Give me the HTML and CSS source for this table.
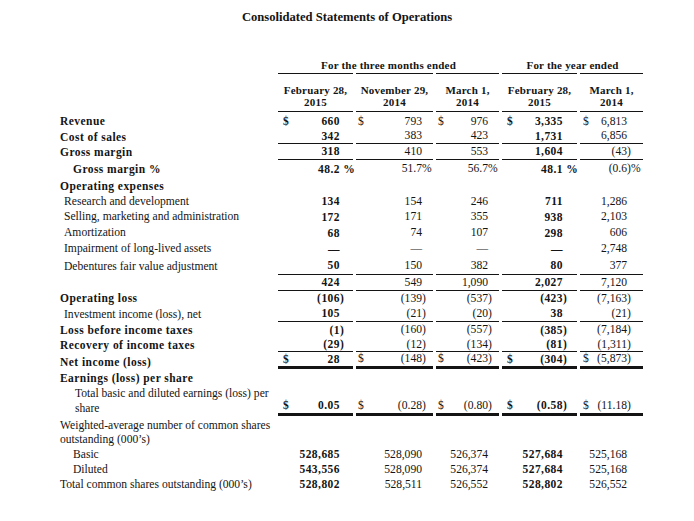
FILE: index.html
```html
<!DOCTYPE html>
<html lang="en">
<head>
<meta charset="utf-8">
<title>Consolidated Statements of Operations</title>
<link rel="stylesheet" href="styles.css">
</head>
<body>
<main class="page">
  <h1 class="title">Consolidated Statements of Operations</h1>
  <table class="stmt">
    <colgroup>
      <col class="c-label"><col class="c-1"><col class="c-2"><col class="c-3"><col class="c-4"><col class="c-5">
    </colgroup>
    <thead>
      <tr class="grp"><th></th><th colspan="3">For the three months ended</th><th colspan="2">For the year ended</th></tr>
      <tr class="grp-rule"><th></th><th></th><th></th><th></th><th></th><th></th></tr>
      <tr class="cols"><th></th><th>February 28,<br>2015</th><th>November 29,<br>2014</th><th>March 1,<br>2014</th><th>February 28,<br>2015</th><th>March 1,<br>2014</th></tr>
    </thead>
    <tbody>
      <tr class="main lh15 pt2"><th>Revenue</th><td><span class="cur">$</span>660</td><td><span class="cur">$</span>793</td><td><span class="cur">$</span>976</td><td><span class="cur">$</span>3,335</td><td><span class="cur">$</span>6,813</td></tr>
      <tr class="main lh14 u"><th>Cost of sales</th><td>342</td><td>383</td><td>423</td><td>1,731</td><td>6,856</td></tr>
      <tr class="main lh15 u"><th>Gross margin</th><td>318</td><td>410</td><td>553</td><td>1,604</td><td>(43<span class="sfx">)</span></td></tr>
      <tr class="main lh16 pt1"><th class="in2">Gross margin %</th><td>48.2<span class="sfx"> %</span></td><td>51.7<span class="sfx">%</span></td><td>56.7<span class="sfx">%</span></td><td>48.1<span class="sfx"> %</span></td><td>(0.6<span class="sfx">)%</span></td></tr>
      <tr class="main lh16 pt1"><th>Operating expenses</th><td></td><td></td><td></td><td></td><td></td></tr>
      <tr class="lh15"><th class="in1">Research and development</th><td>134</td><td>154</td><td>246</td><td>711</td><td>1,286</td></tr>
      <tr class="lh16"><th class="in1">Selling, marketing and administration</th><td>172</td><td>171</td><td>355</td><td>938</td><td>2,103</td></tr>
      <tr class="lh16"><th class="in1">Amortization</th><td>68</td><td>74</td><td>107</td><td>298</td><td>606</td></tr>
      <tr class="lh16"><th class="in1">Impairment of long-lived assets</th><td>—</td><td>—</td><td>—</td><td>—</td><td>2,748</td></tr>
      <tr class="lh17 u"><th class="in1">Debentures fair value adjustment</th><td>50</td><td>150</td><td>382</td><td>80</td><td>377</td></tr>
      <tr class="lh15 u"><th></th><td>424</td><td>549</td><td>1,090</td><td>2,027</td><td>7,120</td></tr>
      <tr class="main lh15"><th>Operating loss</th><td>(106<span class="sfx">)</span></td><td>(139<span class="sfx">)</span></td><td>(537<span class="sfx">)</span></td><td>(423<span class="sfx">)</span></td><td>(7,163<span class="sfx">)</span></td></tr>
      <tr class="lh15 u"><th class="in1">Investment income (loss), net</th><td>105</td><td>(21<span class="sfx">)</span></td><td>(20<span class="sfx">)</span></td><td>38</td><td>(21<span class="sfx">)</span></td></tr>
      <tr class="main lh16"><th>Loss before income taxes</th><td>(1<span class="sfx">)</span></td><td>(160<span class="sfx">)</span></td><td>(557<span class="sfx">)</span></td><td>(385<span class="sfx">)</span></td><td>(7,184<span class="sfx">)</span></td></tr>
      <tr class="main lh13 u"><th>Recovery of income taxes</th><td>(29<span class="sfx">)</span></td><td>(12<span class="sfx">)</span></td><td>(134<span class="sfx">)</span></td><td>(81<span class="sfx">)</span></td><td>(1,311<span class="sfx">)</span></td></tr>
      <tr class="main lh14 uu"><th>Net income (loss)</th><td><span class="cur">$</span>28</td><td><span class="cur">$</span>(148<span class="sfx">)</span></td><td><span class="cur">$</span>(423<span class="sfx">)</span></td><td><span class="cur">$</span>(304<span class="sfx">)</span></td><td><span class="cur">$</span>(5,873<span class="sfx">)</span></td></tr>
      <tr class="main lh15 pt2"><th>Earnings (loss) per share</th><td></td><td></td><td></td><td></td><td></td></tr>
      <tr class="lh15 uu"><th class="in3">Total basic and diluted earnings (loss) per<br>share</th><td><span class="cur">$</span>0.05</td><td><span class="cur">$</span>(0.28<span class="sfx">)</span></td><td><span class="cur">$</span>(0.80<span class="sfx">)</span></td><td><span class="cur">$</span>(0.58<span class="sfx">)</span></td><td><span class="cur">$</span>(11.18<span class="sfx">)</span></td></tr>
      <tr class="lh14 pt3"><th>Weighted-average number of common shares<br>outstanding (000’s)</th><td></td><td></td><td></td><td></td><td></td></tr>
      <tr class="lh15"><th class="in2">Basic</th><td>528,685</td><td>528,090</td><td>526,374</td><td>527,684</td><td>525,168</td></tr>
      <tr class="lh15"><th class="in2">Diluted</th><td>543,556</td><td>528,090</td><td>526,374</td><td>527,684</td><td>525,168</td></tr>
      <tr class="lh15"><th>Total common shares outstanding (000’s)</th><td>528,802</td><td>528,511</td><td>526,552</td><td>528,802</td><td>526,552</td></tr>
    </tbody>
  </table>
</main>
</body>
</html>
```
FILE: styles.css
```css
html, body {
  margin: 0;
  background: #fff;
}

body {
  font-family: "Liberation Serif", "Times New Roman", serif;
  font-size: 11.6px;
  color: #141414;
}

.page {
  width: 694px;
  padding-top: 9px;
}

.title {
  margin: 0;
  font-size: 12.6px;
  line-height: 16px;
  font-weight: bold;
  text-align: center;
}

.stmt {
  margin: 32px 0 0 57px;
  width: 589px;
  table-layout: fixed;
  border-collapse: separate;
  border-spacing: 3px 0;
}

.c-label { width: 215px; }
.c-1 { width: 75px; }
.c-2 { width: 77px; }
.c-3 { width: 63px; }
.c-4 { width: 75px; }
.c-5 { width: 63px; }

.stmt th,
.stmt td {
  padding: 0;
  font-weight: normal;
  white-space: nowrap;
  vertical-align: bottom;
}

/* header */
.grp th {
  font-weight: bold;
  font-size: 11px;
  letter-spacing: 0.2px;
  line-height: 16px;
  text-align: center;
}

.grp-rule th {
  height: 0;
  line-height: 0;
  font-size: 0;
}

.grp-rule th + th {
  border-top: 1px solid #141414;
}

.cols th {
  font-weight: bold;
  font-size: 11px;
  letter-spacing: 0.2px;
  line-height: 12px;
  text-align: center;
  padding: 10px 0 3px;
}

.cols th + th {
  border-bottom: 1px solid #141414;
}

/* body */
.stmt tbody th {
  text-align: left;
}

.stmt .main th {
  font-weight: bold;
  font-size: 11.5px;
  letter-spacing: 0.45px;
}

.stmt .in1 { padding-left: 4px; }
.stmt .in2 { padding-left: 13px; }
.stmt .in3 { padding-left: 15px; }

.stmt tbody td {
  text-align: right;
}

.stmt tbody td:nth-child(2),
.stmt tbody td:nth-child(5) {
  font-weight: bold;
  font-size: 11.5px;
  letter-spacing: 0.45px;
}

.stmt tbody td:nth-child(2) { padding-left: 5px; padding-right: 13px; }
.stmt tbody td:nth-child(3) { padding-left: 2px; padding-right: 11px; }
.stmt tbody td:nth-child(4) { padding-left: 2px; padding-right: 11px; }
.stmt tbody td:nth-child(5) { padding-left: 5px; padding-right: 14px; }
.stmt tbody td:nth-child(6) { padding-left: 3px; padding-right: 16px; }

.cur {
  float: left;
}

.sfx {
  display: inline-block;
  width: 0;
  text-align: left;
  white-space: pre;
}

.lh13 > * { line-height: 13px; }
.lh14 > * { line-height: 14px; }
.lh15 > * { line-height: 15px; }
.lh16 > * { line-height: 16px; }
.lh17 > * { line-height: 17px; }

.stmt .pt1 > * { padding-top: 1px; }
.stmt .pt2 > * { padding-top: 2px; }
.stmt .pt3 > * { padding-top: 3px; }

.stmt .u td { border-bottom: 1px solid #141414; }
.stmt .uu td { border-bottom: 3px solid #141414; }
```
